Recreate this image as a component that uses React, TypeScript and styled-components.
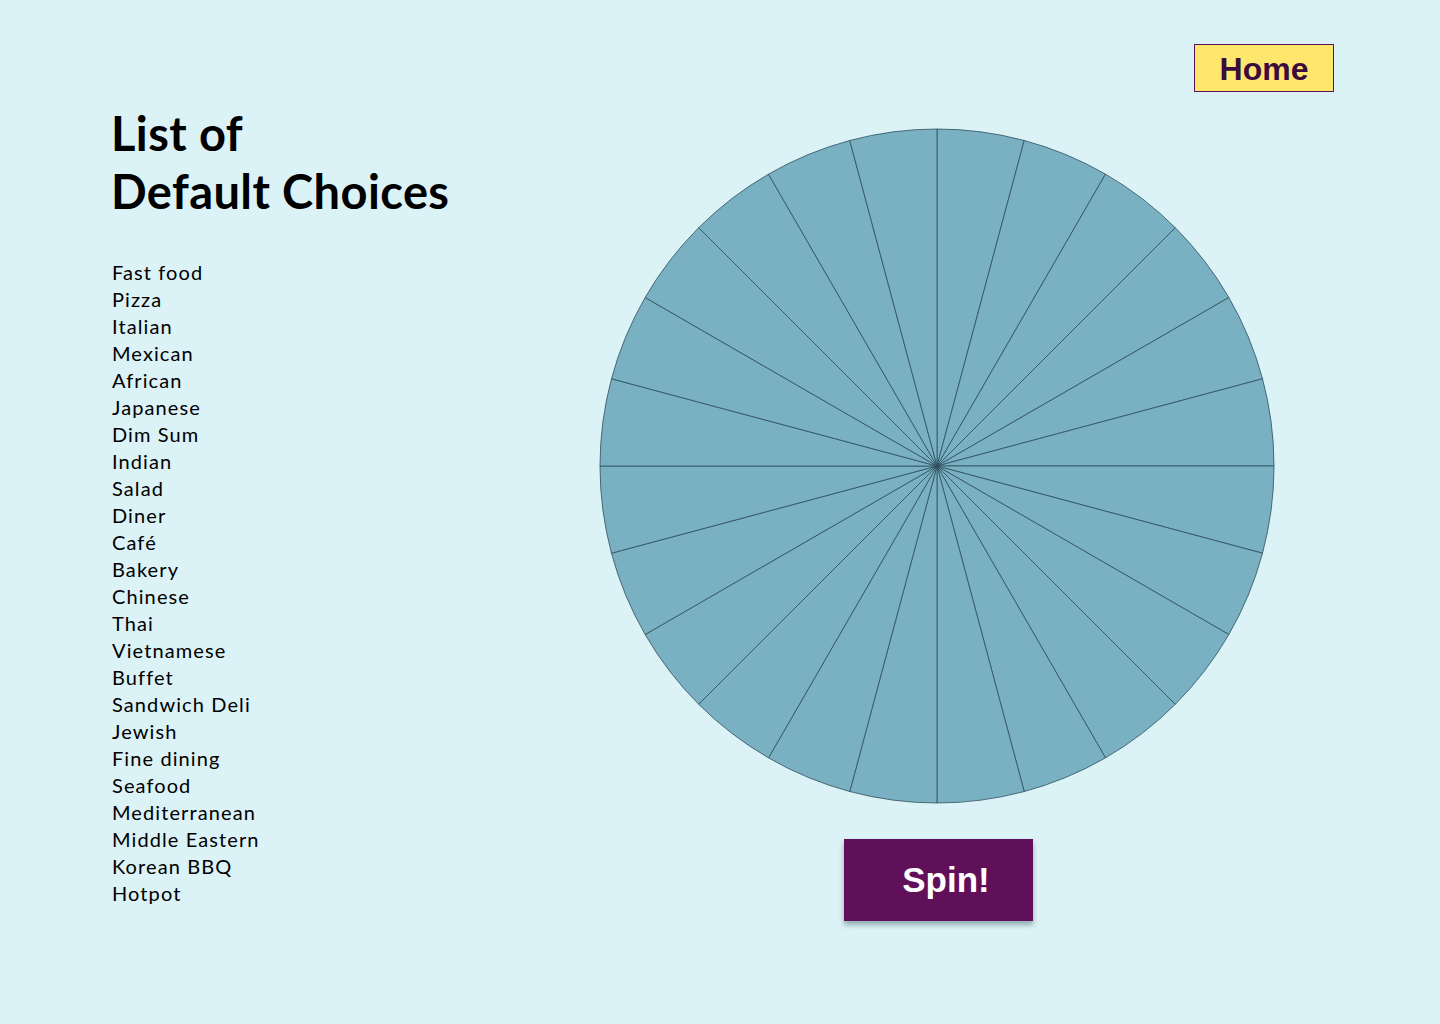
import React from "react";
import styled, { createGlobalStyle } from "styled-components";

const GlobalStyle = createGlobalStyle`
  html, body { margin: 0; padding: 0; }
  body {
    background: #dbf2f6;
    font-family: "Lato", "Noto Sans", sans-serif;
    color: #000;
  }
`;

const Page = styled.div`
  display: flex;
  min-height: 1024px;
  box-sizing: border-box;
  padding: 0 106px 0 112px;
  background: #dbf2f6;
`;

const LeftColumn = styled.section`
  width: 430px;
  flex: none;
  display: flex;
  flex-direction: column;
  padding-top: 104px;
`;

const Title = styled.h1`
  margin: 0 0 0 -1px;
  font-family: "Lato", sans-serif;
  font-weight: 700;
  font-size: 47px;
  line-height: 58px;
  letter-spacing: 0.4px;
`;

const ChoiceList = styled.ul`
  list-style: none;
  margin: 39px 0 0;
  padding: 0;
`;

const Choice = styled.li`
  font-family: "Lato", sans-serif;
  font-size: 20px;
  line-height: 27px;
  letter-spacing: 1.1px;
`;

const RightColumn = styled.section`
  flex: 1;
  display: flex;
  flex-direction: column;
  align-items: center;
  padding-top: 44px;
`;

const HomeButton = styled.button`
  align-self: flex-end;
  width: 140px;
  height: 48px;
  box-sizing: border-box;
  background: #ffe66d;
  border: 1px solid #5f1059;
  color: #3b0a3f;
  font-family: "Liberation Sans", Arial, sans-serif;
  font-weight: 700;
  font-size: 32px;
  padding: 3px 0 0;
  cursor: pointer;
`;

const WheelBox = styled.div`
  margin-top: 36px;
  width: 676px;
  height: 676px;
  margin-left: -2px;
`;

const SpinButton = styled.button`
  margin-top: 35px;
  width: 189px;
  height: 82px;
  box-sizing: border-box;
  padding: 0 0 0 16px;
  background: #5f1059;
  border: none;
  color: #fff;
  font-family: "Liberation Sans", Arial, sans-serif;
  font-weight: 700;
  font-size: 35px;
  box-shadow: 0 4px 5px rgba(60, 90, 100, 0.45);
  cursor: pointer;
`;

const choices = [
  "Fast food", "Pizza", "Italian", "Mexican", "African", "Japanese", "Dim Sum",
  "Indian", "Salad", "Diner", "Café", "Bakery", "Chinese", "Thai", "Vietnamese",
  "Buffet", "Sandwich Deli", "Jewish", "Fine dining", "Seafood", "Mediterranean",
  "Middle Eastern", "Korean BBQ", "Hotpot",
];

function Wheel({ count }: { count: number }) {
  const cx = 338;
  const cy = 338;
  const r = 337;
  const slices = Array.from({ length: count }, (_, i) => {
    const a0 = (i * 2 * Math.PI) / count - Math.PI / 2;
    const a1 = ((i + 1) * 2 * Math.PI) / count - Math.PI / 2;
    const x0 = cx + r * Math.cos(a0);
    const y0 = cy + r * Math.sin(a0);
    const x1 = cx + r * Math.cos(a1);
    const y1 = cy + r * Math.sin(a1);
    return `M${cx},${cy} L${x0.toFixed(2)},${y0.toFixed(2)} A${r},${r} 0 0 1 ${x1.toFixed(2)},${y1.toFixed(2)} Z`;
  });
  return (
    <svg width="676" height="676" viewBox="0 0 676 676">
      {slices.map((d, i) => (
        <path key={i} d={d} fill="#79b1c3" stroke="#2f4e5a" strokeWidth="0.8" />
      ))}
    </svg>
  );
}

export default function App() {
  return (
    <>
      <GlobalStyle />
      <Page>
        <LeftColumn>
          <Title>
            List of
            <br />
            Default Choices
          </Title>
          <ChoiceList>
            {choices.map((c) => (
              <Choice key={c}>{c}</Choice>
            ))}
          </ChoiceList>
        </LeftColumn>
        <RightColumn>
          <HomeButton>Home</HomeButton>
          <WheelBox>
            <Wheel count={choices.length} />
          </WheelBox>
          <SpinButton>Spin!</SpinButton>
        </RightColumn>
      </Page>
    </>
  );
}
